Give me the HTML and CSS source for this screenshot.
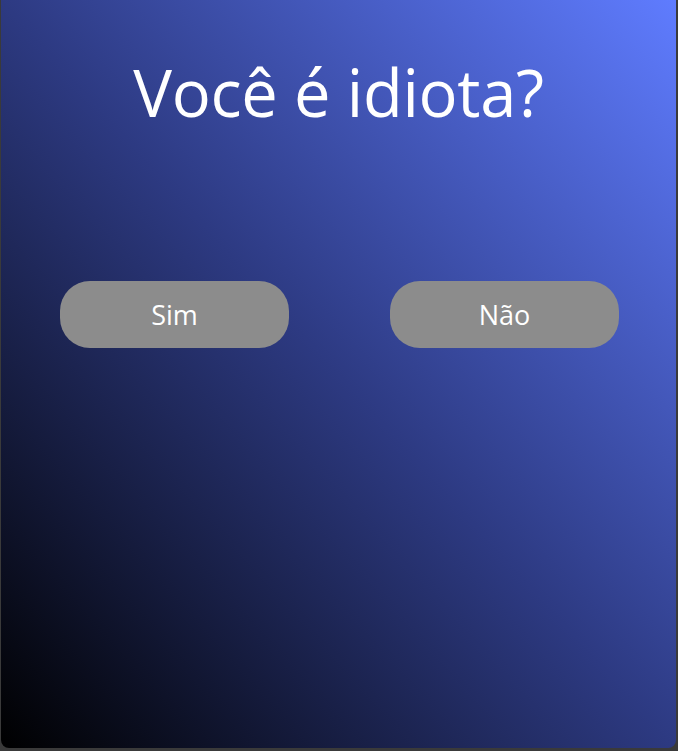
FILE: index.html
```html
<!DOCTYPE html>
<html lang="pt">
<head>
<meta charset="utf-8">
<link rel="stylesheet" href="styles.css">
<title>Você é idiota?</title>
</head>
<body>
<div class="window">
  <h1 class="title">Você é idiota?</h1>
  <div class="buttons">
    <button class="btn">Sim</button>
    <button class="btn">Não</button>
  </div>
</div>
</body>
</html>
```
FILE: styles.css
```css
html, body {
  margin: 0;
  padding: 0;
  background: #3a3a3a;
  width: 678px;
  height: 751px;
  overflow: hidden;
}
.window {
  box-sizing: border-box;
  width: 675px;
  height: 748px;
  margin-left: 1px;
  border-radius: 0 0 8px 8px;
  background: linear-gradient(to top right, #000000 0%, #2d3a82 50%, #5f7cff 100%);
  font-family: "Open Sans", "Noto Sans", sans-serif;
  color: #ffffff;
  display: flex;
  flex-direction: column;
  align-items: stretch;
  overflow: hidden;
}
.title {
  margin: 50px 0 0 0;
  font-size: 65px;
  font-weight: 400;
  line-height: 84px;
  text-align: center;
  letter-spacing: -0.3px;
}
.buttons {
  display: flex;
  gap: 101px;
  padding-left: 59px;
  margin-top: 147px;
}
.btn {
  width: 229px;
  height: 67px;
  border: none;
  border-radius: 30px;
  background: #8c8c8c;
  color: #ffffff;
  font-family: "Open Sans", "Noto Sans", sans-serif;
  font-size: 27px;
  padding: 0;
}
```
